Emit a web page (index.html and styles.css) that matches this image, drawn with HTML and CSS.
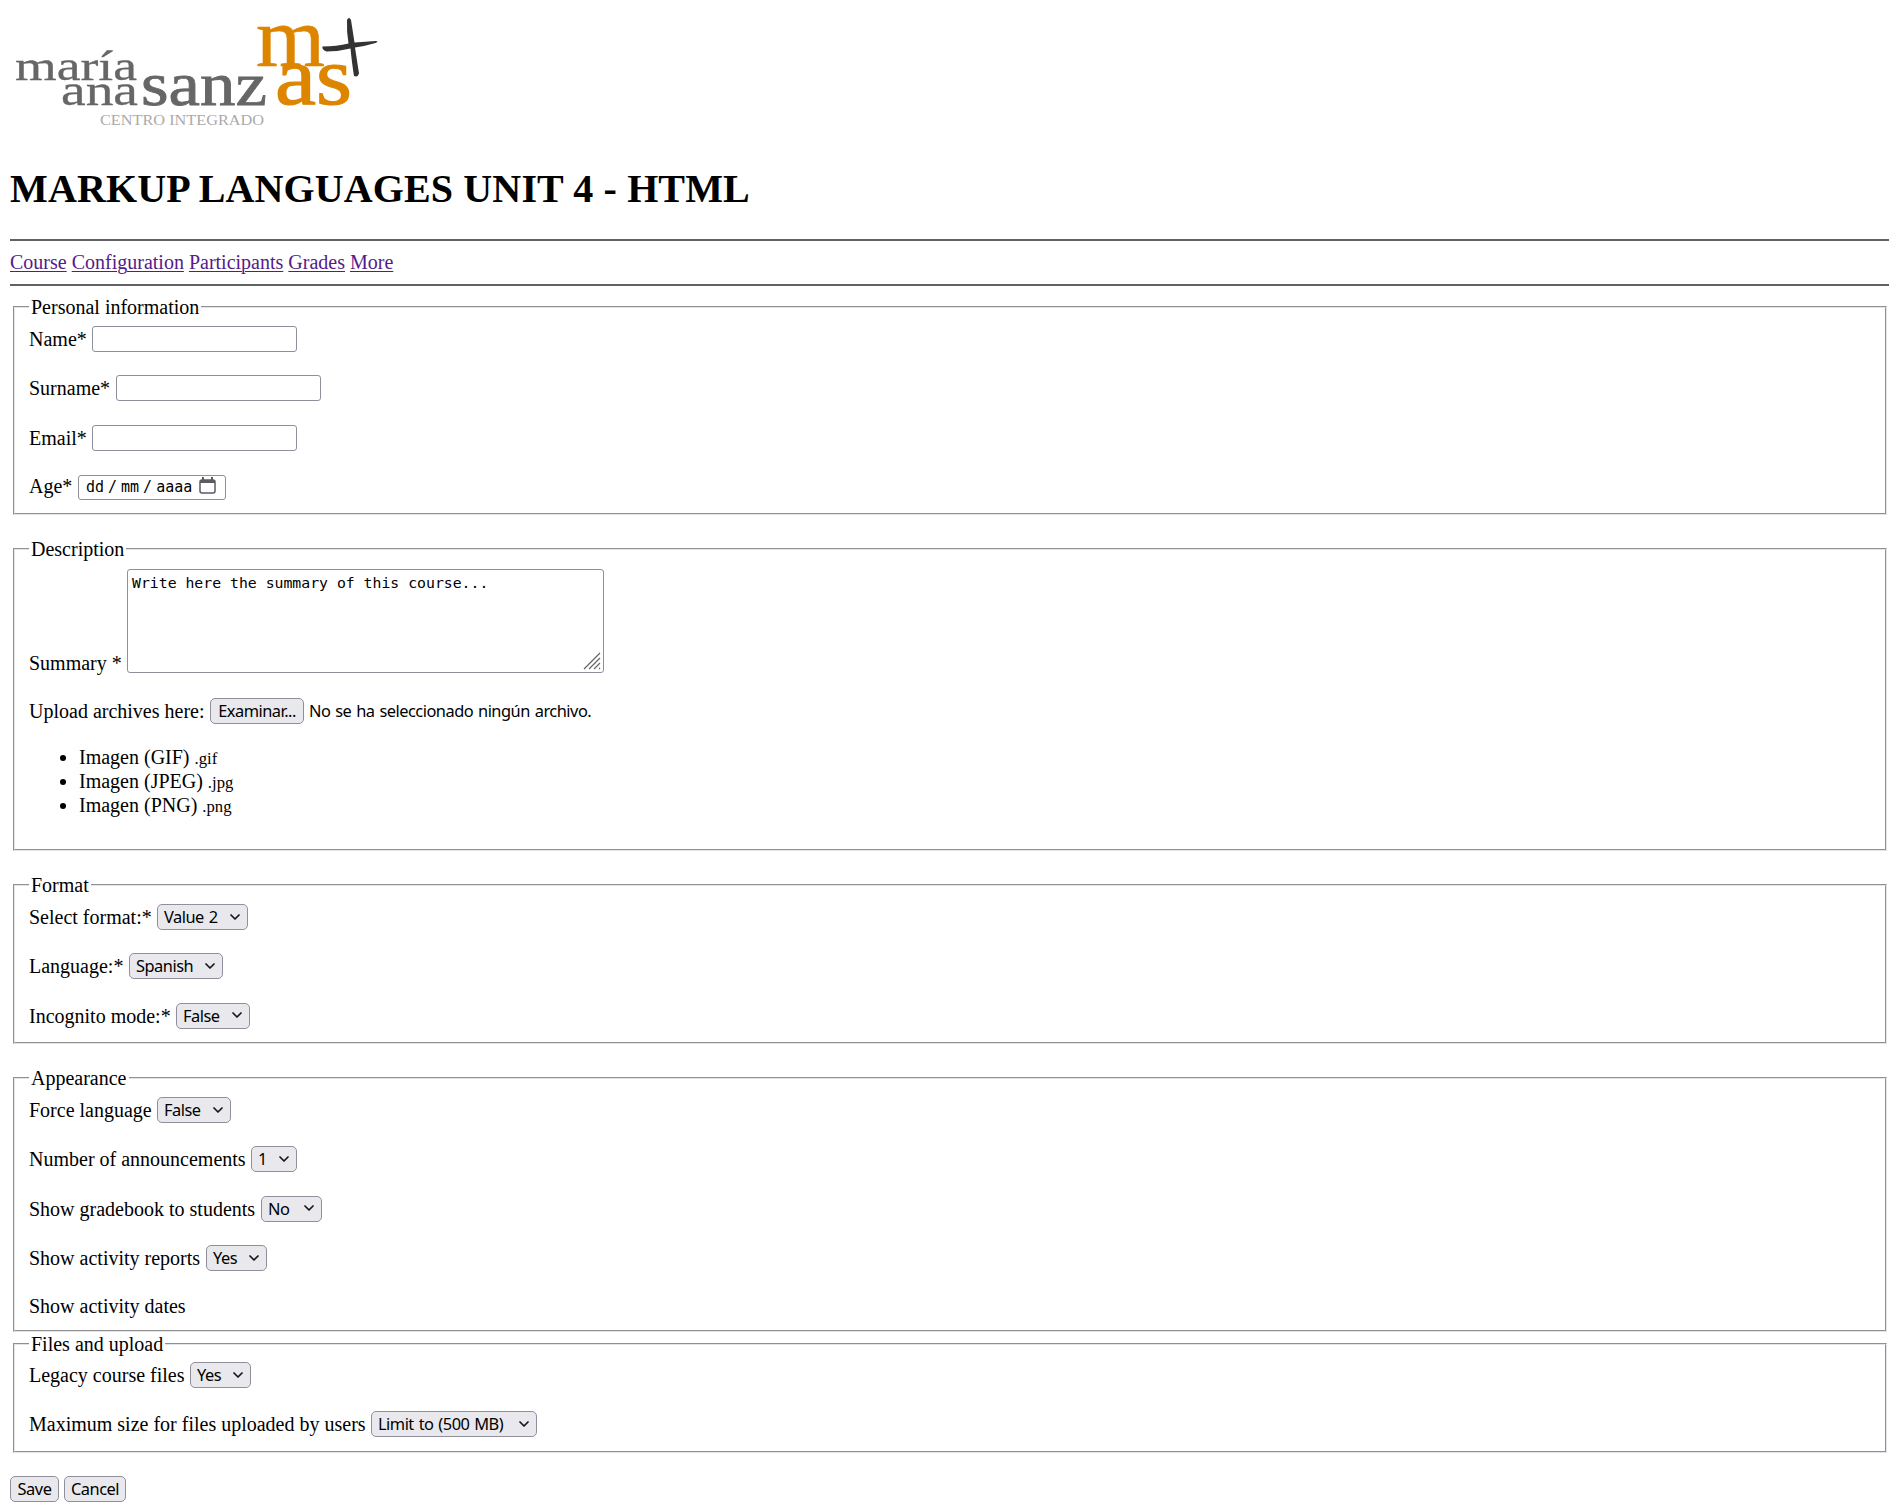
FILE: index.html
```html
<!DOCTYPE html>
<html lang="en">
<head>
<meta charset="utf-8">
<title>Markup Languages Unit 4 - HTML</title>
<link rel="stylesheet" href="styles.css">
</head>
<body>
<svg width="0" height="0" class="defs">
  <symbol id="chev" viewBox="0 0 10 7"><path d="M1 1l4 4 4-4" fill="none" stroke="#15141a" stroke-width="1.7" stroke-linecap="round" stroke-linejoin="round"/></symbol>
</svg>
<header>
  <svg class="logo" width="380" height="130" viewBox="10 10 380 130">
    <g fill="#666" stroke="#666" stroke-width=".3">
      <text x="15" y="80" font-size="43" textLength="122" lengthAdjust="spacingAndGlyphs">maría</text>
      <text x="61" y="105" font-size="45" textLength="77" lengthAdjust="spacingAndGlyphs">ana</text>
      <text x="141" y="105" font-size="61" stroke-width=".8" textLength="126" lengthAdjust="spacingAndGlyphs">sanz</text>
    </g>
    <text x="100" y="125" font-size="15.5" fill="#aaa" textLength="164" lengthAdjust="spacingAndGlyphs">CENTRO INTEGRADO</text>
    <g fill="#de8500" stroke="#de8500" stroke-width=".6">
      <text x="256" y="66" font-size="84" textLength="69" lengthAdjust="spacingAndGlyphs">m</text>
      <text x="275" y="103.500" font-size="82" stroke-width="1.2" textLength="77" lengthAdjust="spacingAndGlyphs">as</text>
    </g>
    <path fill="#333" d="M347 20q2-4 4 0l3.500 22.500q11-1 21-1.500 4 0 0 2-10 3-20.500 4.500l4 26q-1 4-5 2.500-2-12-3.500-27.500-12 3-24 3-5-2-4-5 14 0 26-3-2-12-1.500-23.500z"/>
  </svg>
  <h1>MARKUP LANGUAGES UNIT 4 - HTML</h1>
</header>
<nav><a href="#">Course</a> <a href="#">Configuration</a> <a href="#">Participants</a> <a href="#">Grades</a> <a href="#">More</a></nav>
<form>
  <fieldset class="personal">
    <legend>Personal information</legend>
    <div class="row"><label class="w-name">Name*</label><input class="text" type="text"></div>
    <div class="row"><label class="w-surname">Surname*</label><input class="text" type="text"></div>
    <div class="row"><label class="w-name">Email*</label><input class="text" type="text"></div>
    <div class="row"><label class="w-age">Age*</label><div class="date"><span>dd</span><span>/</span><span>mm</span><span>/</span><span>aaaa</span>
      <svg width="17" height="17" viewBox="0 0 17 17"><rect x="1" y="3" width="15" height="13" rx="2" fill="none" stroke="#5b5b66" stroke-width="1.5"/><path d="M1 3h15v3H1zM3 0h2v4H3zM12 0h2v4h-2z" fill="#5b5b66"/></svg></div></div>
  </fieldset>

  <fieldset class="description">
    <legend>Description</legend>
    <div class="row summary"><label class="w-summary">Summary *</label>
      <div class="area"><textarea>Write here the summary of this course...</textarea>
      <svg class="grip" width="18" height="18" viewBox="0 0 18 18"><path d="M1 17L17 1M6 17L17 6M11 17l6-6M16 17l1-1" stroke="#666" stroke-width="1.2"/></svg></div></div>
    <div class="row upload"><label class="w-upload">Upload archives here:</label><button type="button" class="browse">Examinar...</button><span class="nofile">No se ha seleccionado ningún archivo.</span></div>
    <ul>
      <li>Imagen (GIF) <small>.gif</small></li>
      <li>Imagen (JPEG) <small>.jpg</small></li>
      <li>Imagen (PNG) <small>.png</small></li>
    </ul>
  </fieldset>

  <fieldset class="format">
    <legend>Format</legend>
    <div class="row"><label class="w-format">Select format:*</label><div class="select s-value"><span>Value 2</span><svg><use href="#chev"/></svg></div></div>
    <div class="row"><label class="w-language">Language:*</label><div class="select s-spanish"><span>Spanish</span><svg><use href="#chev"/></svg></div></div>
    <div class="row"><label class="w-incognito">Incognito mode:*</label><div class="select s-false"><span>False</span><svg><use href="#chev"/></svg></div></div>
  </fieldset>

  <fieldset class="appearance">
    <legend>Appearance</legend>
    <div class="row"><label class="w-format">Force language</label><div class="select s-false"><span>False</span><svg><use href="#chev"/></svg></div></div>
    <div class="row"><label class="w-announce">Number of announcements</label><div class="select s-one"><span>1</span><svg><use href="#chev"/></svg></div></div>
    <div class="row"><label class="w-gradebook">Show gradebook to students</label><div class="select s-yes"><span>No</span><svg><use href="#chev"/></svg></div></div>
    <div class="row"><label class="w-reports">Show activity reports</label><div class="select s-yes"><span>Yes</span><svg><use href="#chev"/></svg></div></div>
    <div class="row dates"><label>Show activity dates</label></div>
  </fieldset>

  <fieldset class="files">
    <legend>Files and upload</legend>
    <div class="row"><label class="w-legacy">Legacy course files</label><div class="select s-yes"><span>Yes</span><svg><use href="#chev"/></svg></div></div>
    <div class="row"><label class="w-max">Maximum size for files uploaded by users</label><div class="select s-limit"><span>Limit to (500 MB)</span><svg><use href="#chev"/></svg></div></div>
  </fieldset>
  <div class="actions"><button type="button" class="save">Save</button><button type="button" class="cancel">Cancel</button></div>
</form>
</body>
</html>
```
FILE: styles.css
```css
* { box-sizing: border-box; }
body { margin: 10px 9px 0 10px; font: 20px/24px "Liberation Serif", serif; color: #000; background: #fff; }
.defs { display: none; }
.logo { display: block; overflow: visible; font-family: "Liberation Serif", serif; }
header { height: 231px; border-bottom: 2px solid #626262; }
h1 { margin: 26px 0 0; font-size: 40px; line-height: 46px; letter-spacing: .13px; }
nav { height: 45px; padding-top: 9px; border-bottom: 2px solid #626262; }
nav a { color: #551a8b; text-decoration: underline; text-underline-offset: 2px; text-decoration-thickness: 1px; }
form { padding-top: 10px; }
fieldset { margin: 0 2px 23px 3px; padding: 8px 15px 0 14px; border: 2px groove #e4e4e8; min-width: 0; }
legend { height: 22px; line-height: 22px; padding: 0 2px; }
.personal { height: 219px; }
.description { height: 313px; padding-top: 9px; }
.format { height: 170px; }
.appearance { height: 265px; margin-bottom: 1px; }
.files { height: 120px; padding-top: 7px; }
.row { display: flex; align-items: flex-start; gap: 1px; height: 49.4px; }
label { flex: none; line-height: 26px; white-space: nowrap; }
.w-name { width: 62px; }
.w-surname { width: 86px; }
.w-age { width: 48px; margin-top: -1px; }
.w-summary { width: 97px; margin-top: 81px; }
.w-upload { width: 180px; }
.w-format { width: 127px; }
.w-language { width: 99px; }
.w-incognito { width: 146px; }
.w-announce { width: 221px; }
.w-gradebook { width: 231px; }
.w-reports { width: 176px; }
.w-legacy { width: 160px; }
.w-max { width: 341px; }
.text, .date, textarea { border: 1px solid #8f8f9d; border-radius: 3px; background: #fff; }
.text { width: 205px; height: 26px; padding: 0 4px; }
.date { display: flex; align-items: center; width: 148px; height: 25px; margin-top: .5px; padding-left: 7px; font: 15px "DejaVu Sans Mono", monospace; }
.date span:nth-child(even) { width: 17px; text-align: center; }
.date svg { margin-left: 7px; margin-top: -3px; }
.summary { height: 129px; }
.area { position: relative; width: 477px; height: 104px; }
textarea { display: block; width: 477px; height: 104px; padding: 3px 4px; resize: none; overflow: hidden; color: #000; font: 14.8px/20px "DejaVu Sans Mono", monospace; }
.grip { position: absolute; right: 3px; bottom: 3px; }
.upload { height: 47px; }
button, .select { height: 26px; border: 1px solid #8f8f9d; border-radius: 5px; background: #e9e9ed; color: #000; }
button, .select, .nofile { font: 16.4px/24px "Noto Sans", sans-serif; letter-spacing: -.5px; word-spacing: 1.1px; white-space: nowrap; }
button { padding: 0; text-align: center; }
.browse { width: 94px; }
.nofile { margin-left: 4px; padding-top: 1px; }
ul { margin: 0; padding-left: 50px; }
small { font-size: 16.67px; line-height: 0; }
.select { display: flex; align-items: center; justify-content: space-between; padding: 0 7px 0 6px; }
.select svg { width: 10px; height: 7px; }
.s-value { width: 91px; }
.s-spanish { width: 94px; }
.s-false { width: 74px; }
.s-one { width: 46px; }
.s-yes { width: 61px; }
.s-limit { width: 166px; }
.dates { margin-top: -1.5px; }
.actions { display: flex; gap: 5px; }
.save { width: 49px; }
.cancel { width: 62px; }
```
